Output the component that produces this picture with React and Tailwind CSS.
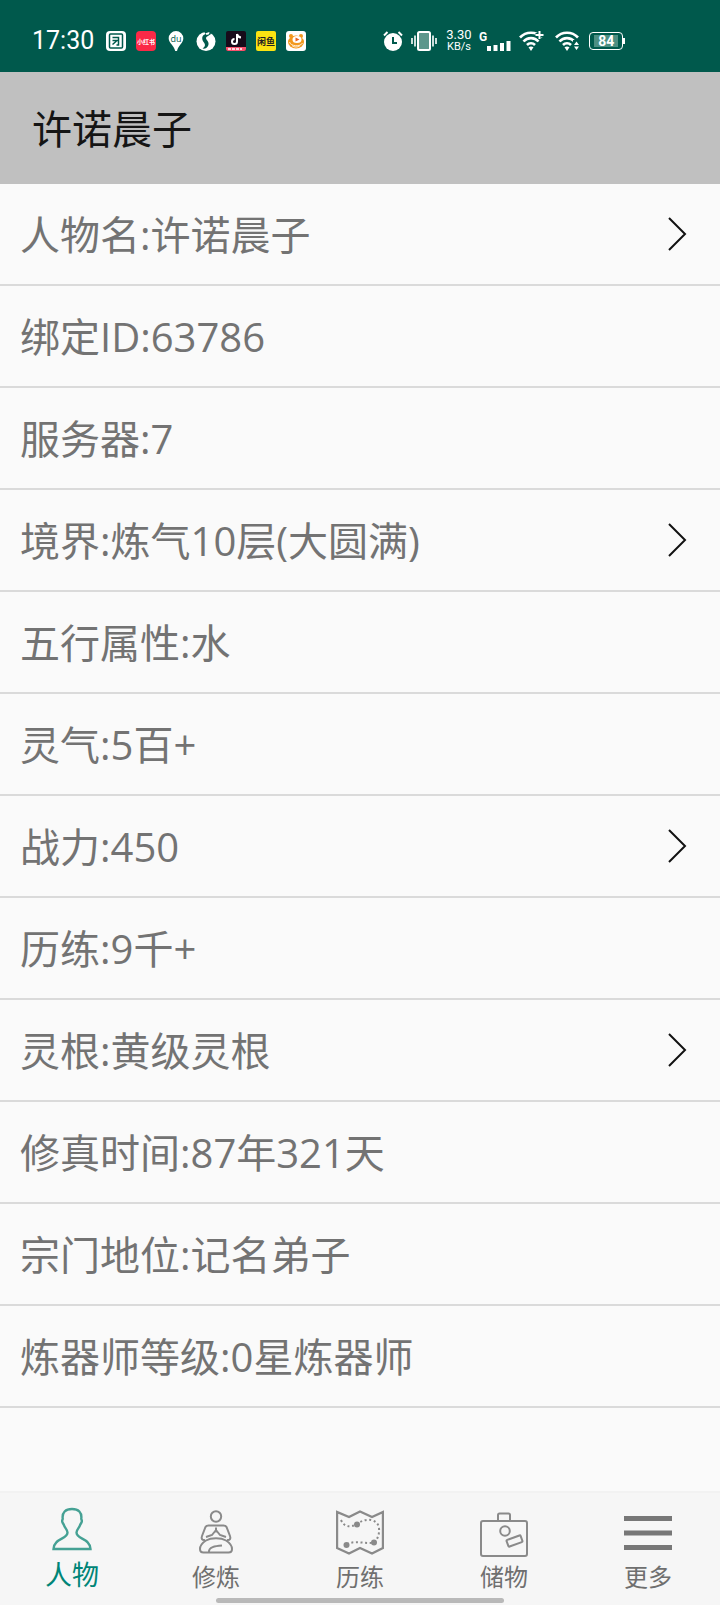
import clsx from "clsx";

const profile = [
  { label: "人物名", value: "许诺晨子", link: true },
  { label: "绑定ID", value: "63786" },
  { label: "服务器", value: "7" },
  { label: "境界", value: "炼气10层(大圆满)", link: true },
  { label: "五行属性", value: "水" },
  { label: "灵气", value: "5百+" },
  { label: "战力", value: "450", link: true },
  { label: "历练", value: "9千+" },
  { label: "灵根", value: "黄级灵根", link: true },
  { label: "修真时间", value: "87年321天" },
  { label: "宗门地位", value: "记名弟子" },
  { label: "炼器师等级", value: "0星炼器师" },
];

const tabs = [
  { name: "人物", Icon: PersonIcon, active: true },
  { name: "修炼", Icon: MeditateIcon },
  { name: "历练", Icon: MapIcon },
  { name: "储物", Icon: CaseIcon },
  { name: "更多", Icon: MoreIcon },
];

// Status bar, left: running apps
function AppIcons() {
  return (
    <div className="flex items-center gap-2.5">
      <svg viewBox="0 0 20 20" className="size-5">
        <rect width="20" height="20" rx="4" fill="#fff" />
        <rect x="3.5" y="3" width="13" height="14" rx="1" fill="none" stroke="#00594c" strokeWidth="1.5" />
        <path d="M6.5 6.5h6v7.5h-2M6.5 9.5h6M10.5 10l-4 3.5" fill="none" stroke="#00594c" strokeWidth="1.5" />
      </svg>
      <svg viewBox="0 0 20 20" className="size-5">
        <rect width="20" height="20" rx="4" fill="#fb2947" />
        <text x="10" y="12.5" textAnchor="middle" fontSize="6" fontWeight="700" fill="#fff">小红书</text>
      </svg>
      <svg viewBox="0 0 20 20" className="size-5">
        <path d="M10 0a7.3 7.3 0 0 1 7.3 7.4c0 4.6-5 6.6-6.3 12.6H9.2C8 14 2.7 12 2.7 7.4A7.3 7.3 0 0 1 10 0z" fill="#fff" />
        <text x="10" y="10.5" textAnchor="middle" fontSize="9" fill="#00594c">du</text>
      </svg>
      <svg viewBox="0 0 20 20" className="size-5">
        <circle cx="10" cy="10.5" r="9.5" fill="#fff" />
        <path d="M8 0l6 0 1 3-3 2c-2 .8-2.5 2-1.500 3.500 1.200 1.800 3 3.500 1.500 6.500-1 2-3 3-5.500 2.500 2-1.200 2.800-2.500 2.300-4.500C8.200 11 6 10 6.200 7c.1-2 1.300-3.300 3.300-4z" fill="#00594c" />
        <path d="M9.5 2.300l4-1.300L13 3.300l-2.500.8z" fill="#fff" />
      </svg>
      <svg viewBox="0 0 20 20" className="size-5">
        <rect width="20" height="20" rx="2" fill="#170b1a" />
        <path d="M11 3v7.5a2.5 2.5 0 1 1-2.5-2.5M11 3c.3 2 1.8 3.300 4 3.500" fill="none" stroke="#fff" strokeWidth="2" />
        <path d="M0 16h20v2a2 2 0 0 1-2 2H2a2 2 0 0 1-2-2z" fill="#f8506c" />
        <path d="M2 18h14" stroke="#fff" strokeWidth="1.5" strokeDasharray="3 1" />
      </svg>
      <svg viewBox="0 0 20 20" className="size-5">
        <rect width="20" height="20" rx="2" fill="#fbe312" />
        <text x="10" y="13.5" textAnchor="middle" fontSize="9" fontWeight="700" fill="#222">闲鱼</text>
      </svg>
      <svg viewBox="0 0 20 20" className="size-5">
        <rect width="20" height="20" rx="3" fill="#fff" />
        <ellipse cx="10" cy="11" rx="8" ry="6.5" fill="#f3981c" />
        <circle cx="5" cy="5" r="2" fill="#f3981c" />
        <circle cx="15" cy="5" r="2" fill="#f3981c" />
        <ellipse cx="11" cy="8.5" rx="4.5" ry="3.5" fill="#fff" />
        <path d="M9.5 6.5l4 2-4 2z" fill="#e9611c" />
        <path d="M3.5 11c1 4.5 11 5 13 1M6 14.5c2 2 6 2 8 0" fill="none" stroke="#fff" strokeWidth=".8" />
      </svg>
    </div>
  );
}

function WifiFan() {
  return (
    <>
      <path d="M1 6.5a15 15 0 0 1 22 0M4.5 10.5a10 10 0 0 1 15 0M8 14a5.5 5.5 0 0 1 8 0" fill="none" stroke="#fff" strokeWidth="2.6" />
      <path d="M9.5 16.3q2.5-1.6 5 0L12 20z" fill="#fff" />
    </>
  );
}

function SystemIcons() {
  return (
    <div className="flex items-center">
      <svg viewBox="0 0 20 20" className="size-5">
        <circle cx="10" cy="11" r="9" fill="#fff" />
        <path d="M1 4.5L4.5 1M19 4.5L15.5 1" stroke="#fff" strokeWidth="2" />
        <path d="M10 6v6h4" fill="none" stroke="#00594c" strokeWidth="2" />
      </svg>
      <svg viewBox="0 0 26 20" className="ml-2 h-5 w-6.5">
        <rect x="7" y="1" width="12" height="18" rx="1.5" fill="#5d978c" stroke="#fff" strokeWidth="2" />
        <path d="M1 7v6M4 4.5v11M22 4.5v11M25 7v6" stroke="#fff" strokeWidth="1.6" />
      </svg>
      <div className="ml-2 w-7 text-center">
        <p className="text-[13px]/3">3.30</p>
        <p className="text-[11px]/3">KB/s</p>
      </div>
      <div className="ml-1.5 flex h-5 items-end">
        <span className="self-start text-xs/3 font-bold">G</span>
        <svg viewBox="0 0 24 12" className="h-3 w-6">
          <path d="M2 12V7M8.5 12V6M15 12V4M21.5 12V2" stroke="#fff" strokeWidth="4" />
        </svg>
      </div>
      <svg viewBox="0 0 26 20" className="ml-2 h-5 w-6.5">
        <WifiFan />
        <path d="M20.5 0v8M16.5 4h8" stroke="#00594c" strokeWidth="4" />
        <path d="M20.5 0v8M16.5 4h8" stroke="#fff" strokeWidth="2" />
      </svg>
      <svg viewBox="0 0 26 20" className="ml-2.5 h-5 w-6.5">
        <WifiFan />
        <path d="M18 9h7v11h-7z" fill="#00594c" />
        <path d="M19 14l2.5-3.5L24 14zM19 15.5l2.5 3.5 2.5-3.5z" fill="#fff" />
      </svg>
      <div className="ml-2 flex items-center">
        <div className="flex h-[18px] w-[34px] items-center justify-center rounded border border-white">
          <span className="bg-[#4d8e82] px-1 text-sm/3 font-bold">84</span>
        </div>
        <span className="h-1.5 w-0.5 bg-white" />
      </div>
    </div>
  );
}

function PersonIcon() {
  return (
    <path
      d="M24 4c-6.5 0-10 3.500-9.300 9.500.1 1.200-.8 1.500-.5 3 .3 1.700 1.200 2 1.700 3.500.8 3 3.600 4.500 3.600 7.500 0 7-13.500 5.500-14 16.500h37c-.5-11-14-9.500-14-16.500 0-3 2.800-4.500 3.600-7.500.5-1.500 1.400-1.800 1.700-3.500.3-1.500-.6-1.800-.5-3C34 7.500 30.500 4 24 4z"
      strokeWidth="2.4"
    />
  );
}

function MeditateIcon() {
  return (
    <g strokeWidth="2">
      <circle cx="24" cy="7.5" r="5.2" />
      <path d="M13 31c-3 .5-4-1.5-3-4l3.5-9c.5-1 1.5-1.5 3-1.5h15c1.5 0 2.500.5 3 1.500l3.500 9c1 2.500 0 4.500-3 4" />
      <path d="M24 18.5v5M24 21l-4 5-6 2M24 21l4 5 6 2" />
      <path d="M14 31.500c5-3 15-3 20 0 4 2.500 6 6 6 8.500 0 2-1.500 3.500-3.500 3.500h-25C9.500 43.500 8 42 8 40c0-2.500 2-6 6-8.500z" />
      <path d="M17 43c-.5-5 6-6 13-6.5" />
    </g>
  );
}

function MapIcon() {
  return (
    <>
      <path d="M1 3v36l12 5.5L24 39l12 5.5L47 39V3L36 8 24 2.5 13 8z" strokeWidth="2.4" />
      <path d="M5 11c3 7 9 8 16 4 9-7 21-5 22 4 .5 6-1 11-5 14.5-9 2-18-3-28 2" strokeWidth="2" strokeDasharray="2 2.6" />
      <g fill="currentColor" stroke="none">
        <circle cx="21" cy="15.5" r="3" />
        <circle cx="38" cy="33.5" r="3" />
        <circle cx="10.5" cy="36" r="3" />
      </g>
    </>
  );
}

function CaseIcon() {
  return (
    <g strokeWidth="2">
      <rect x="1" y="12" width="46" height="35" rx="2" />
      <path d="M18 12V6q0-1.5 1.5-1.5h9Q30 4.5 30 6v6" />
      <circle cx="25" cy="22" r="4.8" />
      <rect x="27" y="28.5" width="15" height="7" rx="1" transform="rotate(-20 34.5 32)" />
    </g>
  );
}

function MoreIcon() {
  return <path d="M0 9.5h48M0 24h48M0 38.5h48" strokeWidth="5" stroke="#777" />;
}

function Row({ label, value, link }) {
  const text = `${label}:${value}`;
  const rowClass = "flex h-[102px] w-full items-center justify-between border-b-2 border-[#dadada] pt-0.5 pl-5 pr-8 text-left";
  if (!link) {
    return <li className={rowClass}>{text}</li>;
  }
  return (
    <li>
      <button type="button" className={rowClass}>
        {text}
        <svg viewBox="0 0 20 36" className="h-9 w-5" fill="none" stroke="#111" strokeWidth="2">
          <path d="M1 1l16 16L1 33" />
        </svg>
      </button>
    </li>
  );
}

export default function App() {
  return (
    <div className="flex min-h-screen flex-col bg-[#fafafa] font-['Open_Sans','Noto_Sans_CJK_SC',sans-serif]">
      <div className="flex h-[72px] items-center bg-[#00594c] pt-2.5 pl-8 text-white">
        <span className="w-[74px] font-[Roboto,sans-serif] text-[25px]/8">17:30</span>
        <AppIcons />
        <div className="ml-[77px] font-[Roboto,sans-serif]">
          <SystemIcons />
        </div>
      </div>

      <header className="flex h-28 items-center bg-[#c0c0c0] px-8 pt-0.5">
        <h1 className="text-[40px]/12 text-[#151515]">许诺晨子</h1>
      </header>

      <ul className="text-[40px]/12 text-[#737373]">
        {profile.map((item) => (
          <Row key={item.label} {...item} />
        ))}
      </ul>

      <nav className="relative mt-auto flex h-[114px] border-t-2 border-[#f2f2f2] bg-[#f6f6f6]">
        {tabs.map(({ name, Icon, active }) => (
          <button
            key={name}
            type="button"
            className={clsx(
              "flex flex-1 flex-col items-center gap-1",
              active ? "pt-3 text-[#008577]" : "pt-4 text-[#6f6f6f]"
            )}
          >
            <svg
              viewBox="0 0 48 48"
              className={clsx("size-12", active ? "text-[#45a194]" : "text-[#8a8a8a]")}
              fill="none"
              stroke="currentColor"
            >
              <Icon />
            </svg>
            <span className={active ? "text-[27px]/9" : "text-2xl/8"}>{name}</span>
          </button>
        ))}
        <div className="absolute inset-x-[30%] bottom-0.5 h-[5px] rounded-full bg-[#b9b9b9]" />
      </nav>
    </div>
  );
}
